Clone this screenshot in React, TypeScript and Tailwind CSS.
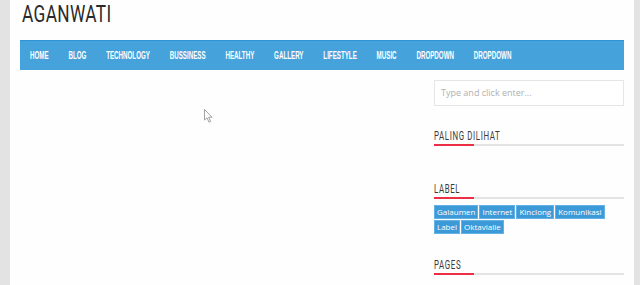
import React from "react";

const navItems = [
  "HOME",
  "BLOG",
  "TECHNOLOGY",
  "BUSSINESS",
  "HEALTHY",
  "GALLERY",
  "LIFESTYLE",
  "MUSIC",
  "DROPDOWN",
  "DROPDOWN",
];

const tags = ["Galaumen", "Internet", "Kinclong", "Komunikasi", "Label", "Oktavialie"];

function WidgetTitle({ title }: { title: string }) {
  return (
    <div>
      <div className="h-[15px] overflow-visible whitespace-nowrap">
        <span className="inline-block origin-left scale-x-[0.63] font-['Roboto',sans-serif] text-[12.5px] leading-[15px] tracking-[1px] text-[#3a3a3a]">
          {title}
        </span>
      </div>
      <div className="mt-[7px] flex h-[2px]">
        <div className="w-[40px] bg-[#ec2f47]" />
        <div className="flex-1 bg-[#e3e3e3]" />
      </div>
    </div>
  );
}

export default function App() {
  return (
    <div className="relative h-[285px] w-[640px] overflow-hidden bg-[#e3e3e3]">
      <div className="ml-[10px] h-full w-[624px] bg-[#fefefe] px-[10px]">
        <header className="h-[40px] overflow-hidden pt-[2px] pl-[2px] whitespace-nowrap">
          <span className="inline-block origin-left scale-x-[0.72] font-['Roboto',sans-serif] text-[24px] leading-[24px] tracking-[0.5px] text-[#2a2a2a]">
            AGANWATI
          </span>
        </header>

        <nav className="h-[30px] overflow-hidden border-t border-[#2f93d5] bg-[#45a2db] pl-[10px]">
          <ul className="flex origin-left scale-x-[0.62] gap-[32px] whitespace-nowrap">
            {navItems.map((item, i) => (
              <li
                key={i}
                className="font-['Liberation_Sans',Arial,sans-serif] text-[10px] font-bold leading-[29px] text-white"
              >
                {item}
              </li>
            ))}
          </ul>
        </nav>

        <div className="flex">
          <main className="flex-1" />
          <aside className="w-[190px]">
            <div className="mt-[10px] flex h-[26px] items-center border border-[#e6e6e6] bg-white px-[6px]">
              <span className="font-['Open_Sans',sans-serif] text-[9px] text-[#b0b0b0]">
                Type and click enter...
              </span>
            </div>

            <div className="mt-[16px]">
              <WidgetTitle title="PALING DILIHAT" />
            </div>

            <div className="mt-[29px]">
              <WidgetTitle title="LABEL" />
              <div className="mt-[6px] flex flex-wrap gap-[1px]">
                {tags.map((t) => (
                  <span
                    key={t}
                    className="flex h-[14px] items-center border border-[#62b2e6] bg-[#3d9ad8] px-[2px] font-['Open_Sans',sans-serif] text-[8px] leading-none text-white"
                  >
                    {t}
                  </span>
                ))}
              </div>
            </div>

            <div className="mt-[17px]">
              <WidgetTitle title="PAGES" />
            </div>
          </aside>
        </div>
      </div>

      <svg
        className="absolute left-[204px] top-[109px]"
        width="10"
        height="15"
        viewBox="0 0 10 15"
      >
        <path
          d="M0.5 0.5 L0.5 11 L3 8.8 L5 13.2 L6.6 12.5 L4.7 8.2 L8 8.2 Z"
          fill="#ffffff"
          stroke="#8a8a8a"
          strokeWidth="0.8"
        />
      </svg>
    </div>
  );
}
